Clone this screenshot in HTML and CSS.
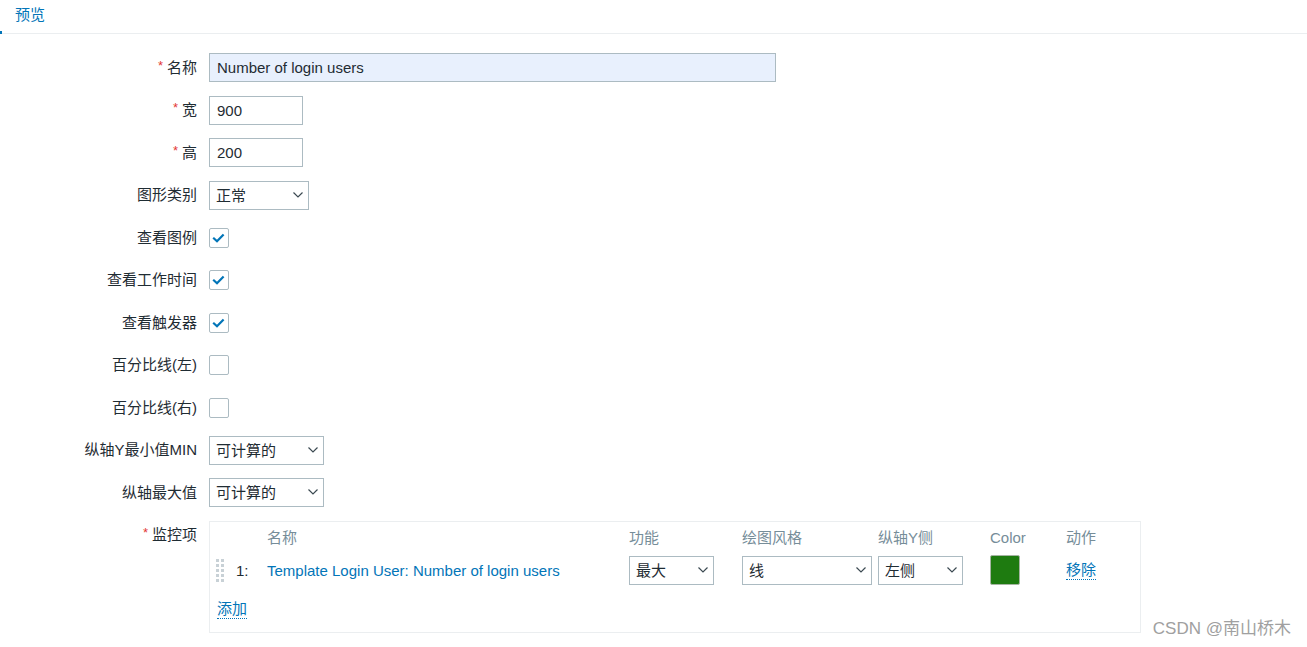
FILE: index.html
```html
<!DOCTYPE html>
<html lang="zh-CN">
<head>
<meta charset="utf-8">
<title>预览</title>
<link rel="stylesheet" href="styles.css">
</head>
<body>
<div class="tabs">
  <span class="tab">预览</span>
  <span class="tab-mark"></span>
</div>
<div class="form">
  <label class="lbl"><span class="req">*</span>名称</label>
  <div class="field"><div class="input input-name">Number of login users</div></div>

  <label class="lbl"><span class="req">*</span>宽</label>
  <div class="field"><div class="input input-num">900</div></div>

  <label class="lbl"><span class="req">*</span>高</label>
  <div class="field"><div class="input input-num">200</div></div>

  <label class="lbl">图形类别</label>
  <div class="field"><div class="select sel-type"><span>正常</span><svg class="chev" width="10" height="6" viewBox="0 0 10 6"><path d="M0.5 0.5 L5 5 L9.5 0.5" fill="none" stroke="#3c4a52" stroke-width="1.2"/></svg></div></div>

  <label class="lbl">查看图例</label>
  <div class="field"><span class="cb checked"><svg width="20" height="20" viewBox="0 0 20 20"><path d="M4.2 9.8 L8 13.3 L14.6 6.6" fill="none" stroke="#0275b8" stroke-width="2.2"/></svg></span></div>

  <label class="lbl">查看工作时间</label>
  <div class="field"><span class="cb checked"><svg width="20" height="20" viewBox="0 0 20 20"><path d="M4.2 9.8 L8 13.3 L14.6 6.6" fill="none" stroke="#0275b8" stroke-width="2.2"/></svg></span></div>

  <label class="lbl">查看触发器</label>
  <div class="field"><span class="cb checked"><svg width="20" height="20" viewBox="0 0 20 20"><path d="M4.2 9.8 L8 13.3 L14.6 6.6" fill="none" stroke="#0275b8" stroke-width="2.2"/></svg></span></div>

  <label class="lbl">百分比线(左)</label>
  <div class="field"><span class="cb"></span></div>

  <label class="lbl">百分比线(右)</label>
  <div class="field"><span class="cb"></span></div>

  <label class="lbl">纵轴Y最小值MIN</label>
  <div class="field"><div class="select sel-calc"><span>可计算的</span><svg class="chev" width="10" height="6" viewBox="0 0 10 6"><path d="M0.5 0.5 L5 5 L9.5 0.5" fill="none" stroke="#3c4a52" stroke-width="1.2"/></svg></div></div>

  <label class="lbl">纵轴最大值</label>
  <div class="field"><div class="select sel-calc"><span>可计算的</span><svg class="chev" width="10" height="6" viewBox="0 0 10 6"><path d="M0.5 0.5 L5 5 L9.5 0.5" fill="none" stroke="#3c4a52" stroke-width="1.2"/></svg></div></div>

  <label class="lbl lbl-top"><span class="req">*</span>监控项</label>
  <div class="field field-top">
    <div class="items">
      <div class="items-grid">
        <span></span><span></span>
        <span class="th">名称</span>
        <span class="th">功能</span>
        <span class="th">绘图风格</span>
        <span class="th">纵轴Y侧</span>
        <span class="th">Color</span>
        <span class="th">动作</span>

        <span class="handle"><i></i><i></i><i></i><i></i><i></i><i></i><i></i><i></i><i></i><i></i></span>
        <span class="num">1:</span>
        <span class="item-link">Template Login User: Number of login users</span>
        <div class="select sel-func"><span>最大</span><svg class="chev" width="10" height="6" viewBox="0 0 10 6"><path d="M0.5 0.5 L5 5 L9.5 0.5" fill="none" stroke="#3c4a52" stroke-width="1.2"/></svg></div>
        <div class="select sel-style"><span>线</span><svg class="chev" width="10" height="6" viewBox="0 0 10 6"><path d="M0.5 0.5 L5 5 L9.5 0.5" fill="none" stroke="#3c4a52" stroke-width="1.2"/></svg></div>
        <div class="select sel-axis"><span>左侧</span><svg class="chev" width="10" height="6" viewBox="0 0 10 6"><path d="M0.5 0.5 L5 5 L9.5 0.5" fill="none" stroke="#3c4a52" stroke-width="1.2"/></svg></div>
        <span class="swatch"></span>
        <span class="link-dotted">移除</span>
      </div>
      <div class="add-row"><span class="link-dotted">添加</span></div>
    </div>
  </div>
</div>
<div class="watermark">CSDN @南山桥木</div>
</body>
</html>
```

FILE: styles.css
```css
html, body {
  margin: 0;
  padding: 0;
  background: #ffffff;
}
body {
  font-family: "Liberation Sans", Arial, "Noto Sans CJK SC", sans-serif;
  font-size: 15px;
  color: #1f2c33;
  width: 1307px;
  height: 647px;
  overflow: hidden;
  position: relative;
}
.tabs {
  position: relative;
  height: 33px;
  border-bottom: 1px solid #ebeef0;
  box-sizing: content-box;
}
.tab {
  display: inline-block;
  padding-left: 15px;
  line-height: 30px;
  color: #0275b8;
}
.tab-mark {
  position: absolute;
  left: 0;
  bottom: -1px;
  width: 2px;
  height: 3px;
  background: #0275b8;
}
.form {
  display: grid;
  grid-template-columns: 197px auto;
  grid-template-rows: repeat(11, 29px) auto;
  column-gap: 12px;
  row-gap: 13.5px;
  padding-top: 19px;
}
.lbl {
  height: 29px;
  display: flex;
  align-items: center;
  justify-content: flex-end;
  white-space: nowrap;
  line-height: 20px;
}
.lbl-top {
  align-self: start;
}
.req {
  color: #e33734;
  font-size: 13px;
  margin-right: 4px;
  position: relative;
  top: -2px;
}
.field {
  display: flex;
  align-items: center;
  height: 29px;
}
.field-top {
  height: auto;
  align-items: flex-start;
}
.input {
  box-sizing: border-box;
  height: 29px;
  line-height: 27px;
  border: 1px solid #acbbc2;
  padding: 0 7px;
  background: #ffffff;
  white-space: nowrap;
}
.input-name {
  width: 567px;
  background: #e8f0fd;
}
.input-num {
  width: 94px;
}
.select {
  box-sizing: border-box;
  height: 29px;
  border: 1px solid #acbbc2;
  background: #fff;
  display: flex;
  align-items: center;
  justify-content: space-between;
  padding: 0 5px 0 6px;
  white-space: nowrap;
}
.select span {
  line-height: 27px;
}
.chev {
  display: block;
  margin-top: -1px;
}
.sel-type { width: 100px; }
.sel-calc { width: 115px; }
.cb {
  box-sizing: border-box;
  width: 20px;
  height: 20px;
  border: 1px solid #acbbc2;
  border-radius: 2px;
  display: inline-flex;
  align-items: center;
  justify-content: center;
  background: #fff;
}
.cb svg {
  display: block;
  margin: -1px;
}
.items {
  box-sizing: border-box;
  width: 932px;
  height: 112px;
  border: 1px solid #ebeef0;
  padding: 6px 6px 0 6px;
}
.items-grid {
  display: grid;
  grid-template-columns: 20px 31px 362px 113px 136px 112px 76px auto;
  grid-template-rows: 20px 29px;
  row-gap: 8px;
  align-items: center;
}
.th {
  color: #768d99;
  line-height: 20px;
}
.handle {
  display: grid;
  grid-template-columns: 3px 3px;
  column-gap: 2px;
  row-gap: 2px;
  width: 8px;
  align-self: center;
}
.handle i {
  display: block;
  width: 3px;
  height: 3px;
  background: #c8d1d6;
}
.num {
  color: #1f2c33;
}
.item-link {
  color: #0275b8;
  white-space: nowrap;
}
.sel-func { width: 85px; }
.sel-style { width: 130px; }
.sel-axis { width: 85px; }
.swatch {
  box-sizing: border-box;
  width: 30px;
  height: 30px;
  background: #1e7b10;
  border: 1px solid #a6b5a3;
  border-radius: 2px;
}
.link-dotted {
  color: #0275b8;
  border-bottom: 1px dotted #0275b8;
  line-height: 18px;
  display: inline-block;
}
.items-grid .link-dotted {
  justify-self: start;
}
.add-row {
  margin-top: 14px;
  line-height: 20px;
  padding-left: 1px;
}
.watermark {
  position: absolute;
  right: 16px;
  bottom: 8px;
  color: #a0a0a0;
  font-size: 17px;
  font-family: "Liberation Sans", Arial, "Noto Sans CJK SC", sans-serif;
}
```
